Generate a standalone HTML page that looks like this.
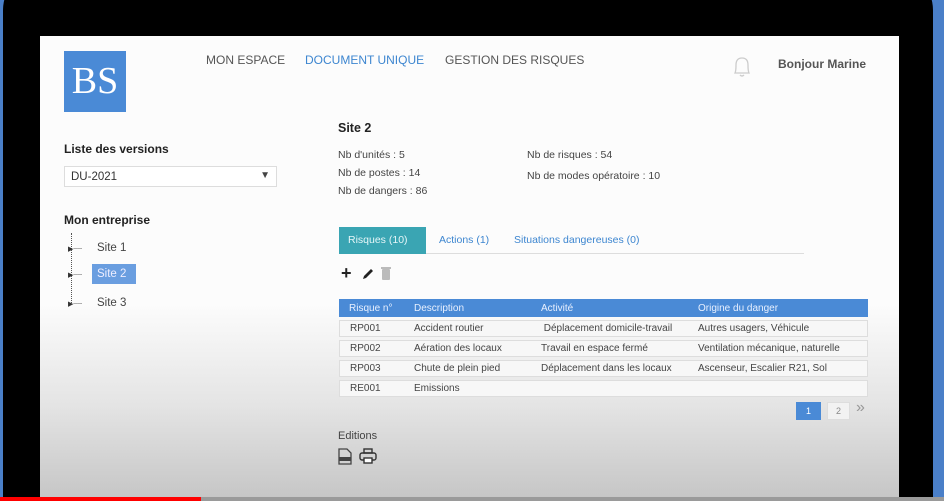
<!DOCTYPE html>
<html style="overflow:hidden;width:944px;height:501px"><head><meta charset="utf-8"><style>
*{margin:0;padding:0;box-sizing:border-box}
body{width:944px;height:501px;overflow:hidden;background:#4a7fc8;font-family:"Liberation Sans",sans-serif;position:relative}
.bezel{position:absolute;left:3px;top:-30px;width:930px;height:531px;background:#000;border-radius:40px 40px 0 0}
.screen{position:absolute;left:40px;top:36px;width:859px;height:462px;background:linear-gradient(#fcfcfc 0%,#fcfcfc 58%,#e4e4e4 80%,#c6c6c6 100%)}
.a{position:absolute;white-space:nowrap}
.nav{font-size:12px;color:#555;top:53px}
.logo{left:64px;top:51px;width:62px;height:61px;background:#4a8ad6;color:#fff;font-family:"Liberation Serif",serif;font-size:38px;text-align:center;line-height:61px}
.h{font-weight:bold;font-size:12.5px;color:#222}
.s{font-size:10.5px;color:#444}
.bar{position:absolute;top:497px;height:4px}
table{position:absolute;left:339px;top:296px;width:529px;border-collapse:separate;border-spacing:0 3px;font-size:10px;color:#444}
th{background:#4a8ad6;color:#e8f0ff;font-weight:normal;text-align:left;height:18px;padding-left:10px}
td{background:#f7f7f7;border-top:1px solid #ddd;border-bottom:1px solid #ddd;height:17px;padding-left:10px}
td:first-child{border-left:1px solid #ddd}td:last-child{border-right:1px solid #ddd}
</style></head><body>
<div class="bezel"></div>
<div class="screen"></div>
<div class="a logo">BS</div>
<div class="a nav" style="left:206px">MON ESPACE</div>
<div class="a nav" style="left:305px;color:#3d86d0">DOCUMENT UNIQUE</div>
<div class="a nav" style="left:445px">GESTION DES RISQUES</div>
<svg class="a" style="left:731px;top:54px" width="22" height="24" viewBox="0 0 22 24"><path d="M4 19 Q5 17 5 11 Q5 4 11 4 Q17 4 17 11 Q17 17 18 19 Z M9 21 Q11 23 13 21" fill="none" stroke="#ccc" stroke-width="1.3"/></svg>
<div class="a" style="left:778px;top:57px;font-size:12px;color:#555;font-weight:bold">Bonjour Marine</div>
<div class="a h" style="left:64px;top:142px;font-size:12px">Liste des versions</div>
<div class="a" style="left:64px;top:166px;width:213px;height:21px;border:1px solid #ddd;background:#fff;font-size:11.5px;color:#333;padding:4px 0 0 6px">DU-2021<span style="position:absolute;right:6px;top:3px;font-size:10px;color:#444">▼</span></div>
<div class="a h" style="left:64px;top:213px;font-size:12px">Mon entreprise</div>
<div class="a" style="left:71px;top:233px;width:1px;height:70px;border-left:1px dotted #555"></div>
<div class="a" style="left:68px;top:245px;font-size:7px;color:#333">▶┈┈</div>
<div class="a" style="left:68px;top:271px;font-size:7px;color:#333">▶┈┈</div>
<div class="a" style="left:68px;top:300px;font-size:7px;color:#333">▶┈┈</div>
<div class="a" style="left:97px;top:242px;font-size:11.5px;color:#444">Site 1</div>
<div class="a" style="left:92px;top:264px;width:44px;height:20px;background:#6a9ee0;color:#eef;font-size:11.5px;padding:4px 0 0 5px">Site 2</div>
<div class="a" style="left:97px;top:297px;font-size:11.5px;color:#444">Site 3</div>
<div class="a h" style="left:338px;top:121px">Site 2</div>
<div class="a s" style="left:338px;top:149px">Nb d'unités : 5</div>
<div class="a s" style="left:338px;top:167px">Nb de postes : 14</div>
<div class="a s" style="left:338px;top:185px">Nb de dangers : 86</div>
<div class="a s" style="left:527px;top:149px">Nb de risques : 54</div>
<div class="a s" style="left:527px;top:170px">Nb de modes opératoire : 10</div>
<div class="a" style="left:339px;top:227px;width:87px;height:27px;background:#3aa5b3;color:#e6f6f8;font-size:10.5px;padding:7px 0 0 9px">Risques (10)</div>
<div class="a" style="left:426px;top:253px;width:378px;height:1px;background:#ddd"></div>
<div class="a" style="left:439px;top:234px;font-size:10.5px;color:#3d86d0">Actions (1)</div>
<div class="a" style="left:514px;top:234px;font-size:10.5px;color:#3d86d0">Situations dangereuses (0)</div>
<div class="a" style="left:341px;top:263px;font-size:18px;font-weight:bold;color:#222;line-height:20px">+</div>
<svg class="a" style="left:361px;top:267px" width="14" height="14" viewBox="0 0 14 14"><path d="M2 12 L3 9 L10 2 L12 4 L5 11 Z" fill="#222"/></svg>
<svg class="a" style="left:380px;top:266px" width="12" height="15" viewBox="0 0 12 15"><rect x="2" y="3" width="8" height="11" rx="1" fill="#bbb"/><rect x="1" y="1" width="10" height="2" fill="#bbb"/></svg>
<table>
<tr><th style="width:65px">Risque n°</th><th style="width:127px">Description</th><th style="width:157px">Activité</th><th>Origine du danger</th></tr>
<tr><td>RP001</td><td>Accident routier</td><td>&nbsp;Déplacement domicile-travail</td><td>Autres usagers, Véhicule</td></tr>
<tr><td>RP002</td><td>Aération des locaux</td><td>Travail en espace fermé</td><td>Ventilation mécanique, naturelle</td></tr>
<tr><td>RP003</td><td>Chute de plein pied</td><td>Déplacement dans les locaux</td><td>Ascenseur, Escalier R21, Sol</td></tr>
<tr><td>RE001</td><td>Emissions</td><td></td><td></td></tr>
</table>
<div class="a" style="left:796px;top:402px;width:25px;height:18px;background:#4a8ad6;color:#fff;font-size:9px;text-align:center;line-height:18px">1</div>
<div class="a" style="left:827px;top:402px;width:23px;height:18px;border:1px solid #ddd;background:#f2f2f2;color:#888;font-size:9px;text-align:center;line-height:16px">2</div>
<div class="a" style="left:856px;top:399px;font-size:16px;color:#999">»</div>
<div class="a" style="left:338px;top:430px;font-size:11px;color:#444">Editions</div>
<svg class="a" style="left:338px;top:448px" width="14" height="17" viewBox="0 0 14 17"><path d="M1 1 H9 L13 5 V16 H1 Z" fill="none" stroke="#444" stroke-width="1.3"/><rect x="1" y="9" width="12" height="4" fill="#444"/></svg>
<svg class="a" style="left:359px;top:448px" width="18" height="16" viewBox="0 0 18 16"><rect x="5" y="1" width="8" height="4" fill="none" stroke="#333" stroke-width="1.4"/><rect x="1" y="5" width="16" height="7" rx="2" fill="none" stroke="#333" stroke-width="1.4"/><rect x="5" y="10" width="8" height="5" fill="#fff" stroke="#333" stroke-width="1.4"/></svg>
<div class="bar" style="left:0;width:944px;background:#9a9a9a"></div>
<div class="bar" style="left:0;width:201px;background:#f00"></div>
</body></html>
